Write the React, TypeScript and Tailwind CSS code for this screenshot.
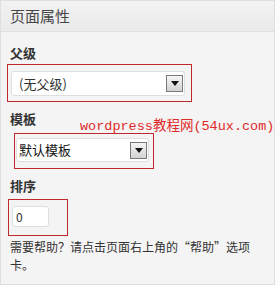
const cjk = { fontFamily: '"Noto Sans CJK SC", "Liberation Sans", sans-serif' };

function ArrowButton() {
  return (
    <span className="flex h-[17px] w-[17px] items-center justify-center border border-[#7a7a7a] bg-gradient-to-b from-[#f6f6f6] to-[#d2d2d2]">
      <svg width="8" height="5" viewBox="0 0 8 5">
        <path d="M0 0H8L4 5Z" fill="#111" />
      </svg>
    </span>
  );
}

export default function App() {
  return (
    <div className="relative h-[285px] w-[280px] bg-[#fbfbfb]" style={cjk}>
      <div className="h-[285px] w-[275px] border border-[#dfdfdf] bg-[#f4f4f4]">
        {/* Header */}
        <div className="flex h-[31px] items-center border-b border-[#dfdfdf] bg-gradient-to-b from-[#f2f2f2] to-[#eaeaea] px-[9px]">
          <h3 className="text-[15px] font-normal leading-[18px] text-[#464646]">页面属性</h3>
        </div>

        {/* Body */}
        <div className="px-[9px]">
          <p className="mt-[13px] text-[13px] font-bold leading-[16px] text-[#333]">父级</p>
          <div className="-ml-[3px] mt-[3px] h-[38px] w-[185px] border border-[#c1272d] pl-[3px] pt-[6px]">
            <div className="flex h-[25px] w-[174px] items-center justify-between rounded-[3px] border border-[#dfdfdf] bg-white pl-[7px] pr-[1px]">
              <span className="text-[13px] leading-[16px] text-[#333]">(无父级)</span>
              <ArrowButton />
            </div>
          </div>

          <p className="mt-[9px] text-[13px] font-bold leading-[16px] text-[#333]">模板</p>
          <div className="ml-[4px] mt-[6px] h-[36px] w-[140px] border border-[#c1272d] pl-[1px] pt-[4px]">
            <div className="flex h-[24px] w-[133px] items-center justify-between rounded-[3px] border border-[#dfdfdf] bg-white pl-[2px] pr-[1px]">
              <span className="text-[13px] leading-[16px] text-[#111]">默认模板</span>
              <ArrowButton />
            </div>
          </div>

          <p className="mt-[9px] text-[13px] font-bold leading-[16px] text-[#333]">排序</p>
          <div className="-ml-[2px] mt-[5px] h-[37px] w-[60px] border border-[#c1272d] pl-[3px] pt-[6px]">
            <div className="flex h-[21px] w-[37px] items-center rounded-[3px] border border-[#dfdfdf] bg-white pl-[3px] text-[12px] text-[#333]">
              0
            </div>
          </div>

          <p className="mt-[2px] w-[250px] text-[12px] leading-[18px] text-[#333]">
            需要帮助？请点击页面右上角的“帮助”选项卡。
          </p>
        </div>
      </div>

      {/* Watermark overlay */}
      <span
        className="absolute left-[80px] top-[119px] whitespace-nowrap text-[13.5px] leading-[16px] text-[#e02a2a]"
        style={{ fontFamily: '"Liberation Mono", "Noto Sans CJK SC", monospace' }}
      >
        wordpress教程网(54ux.com)
      </span>
    </div>
  );
}
